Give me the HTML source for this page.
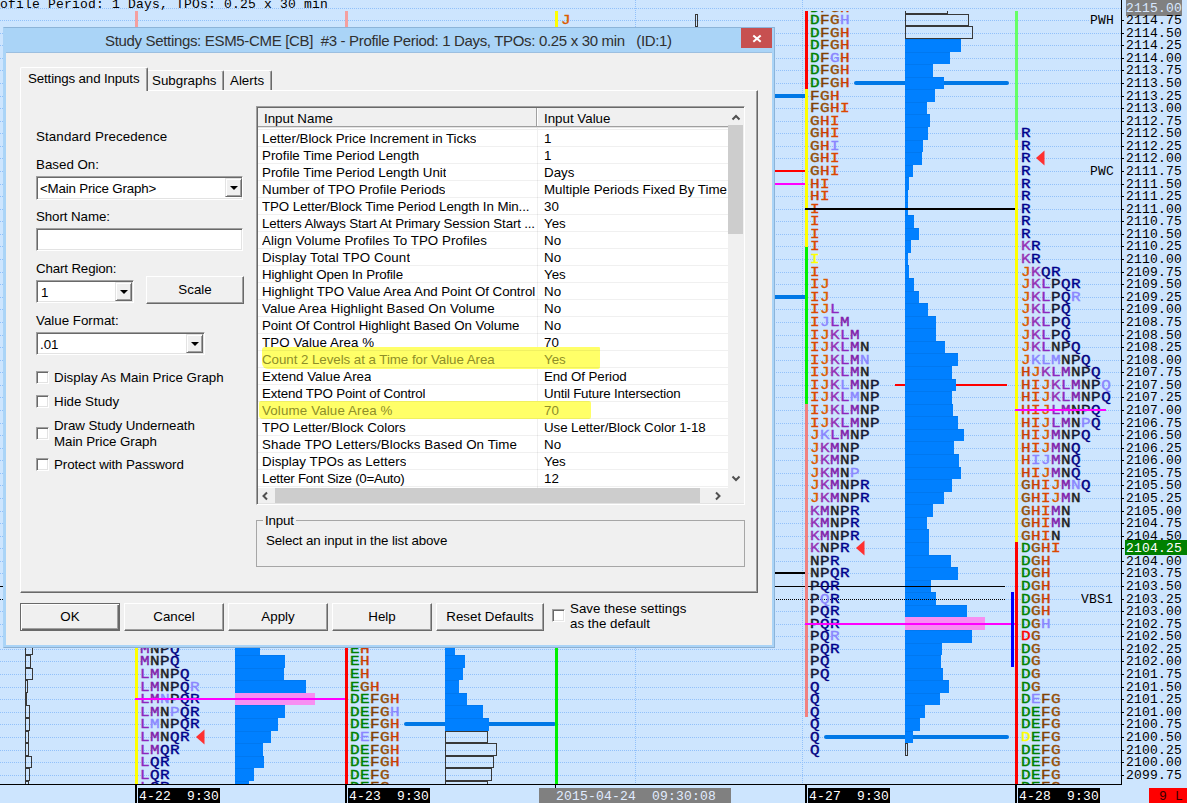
<!DOCTYPE html><html><head><meta charset="utf-8"><title>Study Settings</title><style>

html,body{margin:0;padding:0}
body{width:1187px;height:803px;overflow:hidden;position:relative;background:#cde5fe;font-family:"Liberation Sans",sans-serif;font-size:13.33px;color:#000}
div,span{box-sizing:border-box}
.a{position:absolute}
.g{position:absolute;left:0;width:1121px;height:1px;background:repeating-linear-gradient(90deg,#92c1fa 0 1px,transparent 1px 2px)}
.vg{position:absolute;width:1px;top:0px;height:784px;background:repeating-linear-gradient(180deg,#92c1fa 0 1px,transparent 1px 2px)}
.m{font-family:"Liberation Mono",monospace}
.pl{position:absolute;left:1126px;font-family:"Liberation Mono",monospace;font-size:13px;letter-spacing:0.2px;line-height:13px;height:13px;white-space:pre}
.pl span,.lb span{display:inline-block;transform:scaleY(.94);transform-origin:50% 80%}
.lb{position:absolute;font-family:"Liberation Mono",monospace;font-size:13px;letter-spacing:0.2px;line-height:13px;height:13px;white-space:pre;background:#cde5fe}
  .tk{position:absolute;left:1122px;width:2px;height:1px;background:#000}
.t{position:absolute;font-family:"Liberation Mono",monospace;font-weight:normal;-webkit-text-stroke:0.45px;font-size:16px;letter-spacing:0.4px;line-height:14px;height:14px;white-space:pre;transform:scaleY(.80);transform-origin:50% 50%}
.vb{position:absolute;background:#0080ff}
.vo{position:absolute;border:1px solid #383838}
.tl{position:absolute;top:788px;height:15px;background:#000;color:#fff;font-family:"Liberation Mono",monospace;font-size:13px;letter-spacing:0.2px;line-height:17px;white-space:pre}
.cD{color:#008000}.cE{color:#008000}.cF{color:#804000}.cG{color:#96500a}.cH{color:#cc3c00}.cI{color:#dc4600}.cJ{color:#dc5a00}
.cK{color:#9632b4}.cL{color:#8c28be}.cM{color:#8220aa}.cN{color:#202020}.cP{color:#141432}.cQ{color:#000082}.cR{color:#00008c}
.hl{color:#8a86ff}.yl{color:#ffff00}.rd{color:#ff0000}



#dlg .x{position:absolute;white-space:pre;line-height:16px;height:16px}
.btn{position:absolute;height:28px;top:603px;background:#f0f0f0;border:1px solid;border-color:#fff #696969 #696969 #fff;box-shadow:inset -1px -1px 0 #a0a0a0,inset 1px 1px 0 #f0f0f0;text-align:center;line-height:26px}
.sunk{position:absolute;background:#fff;border:1px solid;border-color:#a0a0a0 #fff #fff #a0a0a0;box-shadow:inset 1px 1px 0 #696969,inset -1px -1px 0 #e3e3e3}
.drop{position:absolute;width:17px;background:#f0f0f0;border:1px solid;border-color:#e3e3e3 #696969 #696969 #e3e3e3;box-shadow:inset 1px 1px 0 #fff,inset -1px -1px 0 #a0a0a0}
.drop:after{content:"";position:absolute;left:4px;top:7px;border:4px solid transparent;border-top:4px solid #000;border-bottom:0}
.cb{position:absolute;width:13px;height:13px;background:#fff;border:1px solid;border-color:#a0a0a0 #fff #fff #a0a0a0;box-shadow:inset 1px 1px 0 #696969,inset -1px -1px 0 #e3e3e3}
.row{position:absolute;left:0;width:470px;height:17px;border-bottom:1px solid rgba(0,0,0,0.06)}
.row .n{position:absolute;left:4px;top:0;line-height:17px;white-space:pre;max-width:275px;overflow:hidden}
.row .v{position:absolute;left:286px;top:0;line-height:17px;white-space:pre}

</style></head><body>
<div class="a" id="chart" style="left:0;top:0;width:1187px;height:803px;overflow:hidden">
<div class="g" style="top:8px"></div>
<div class="g" style="top:20px"></div>
<div class="g" style="top:33px"></div>
<div class="g" style="top:45px"></div>
<div class="g" style="top:58px"></div>
<div class="g" style="top:70px"></div>
<div class="g" style="top:83px"></div>
<div class="g" style="top:96px"></div>
<div class="g" style="top:108px"></div>
<div class="g" style="top:121px"></div>
<div class="g" style="top:133px"></div>
<div class="g" style="top:146px"></div>
<div class="g" style="top:158px"></div>
<div class="g" style="top:171px"></div>
<div class="g" style="top:184px"></div>
<div class="g" style="top:196px"></div>
<div class="g" style="top:209px"></div>
<div class="g" style="top:221px"></div>
<div class="g" style="top:234px"></div>
<div class="g" style="top:246px"></div>
<div class="g" style="top:259px"></div>
<div class="g" style="top:272px"></div>
<div class="g" style="top:284px"></div>
<div class="g" style="top:297px"></div>
<div class="g" style="top:309px"></div>
<div class="g" style="top:322px"></div>
<div class="g" style="top:335px"></div>
<div class="g" style="top:347px"></div>
<div class="g" style="top:360px"></div>
<div class="g" style="top:372px"></div>
<div class="g" style="top:385px"></div>
<div class="g" style="top:397px"></div>
<div class="g" style="top:410px"></div>
<div class="g" style="top:423px"></div>
<div class="g" style="top:435px"></div>
<div class="g" style="top:448px"></div>
<div class="g" style="top:460px"></div>
<div class="g" style="top:473px"></div>
<div class="g" style="top:485px"></div>
<div class="g" style="top:498px"></div>
<div class="g" style="top:511px"></div>
<div class="g" style="top:523px"></div>
<div class="g" style="top:536px"></div>
<div class="g" style="top:548px"></div>
<div class="g" style="top:561px"></div>
<div class="g" style="top:573px"></div>
<div class="g" style="top:586px"></div>
<div class="g" style="top:599px"></div>
<div class="g" style="top:611px"></div>
<div class="g" style="top:624px"></div>
<div class="g" style="top:636px"></div>
<div class="g" style="top:649px"></div>
<div class="g" style="top:661px"></div>
<div class="g" style="top:674px"></div>
<div class="g" style="top:687px"></div>
<div class="g" style="top:699px"></div>
<div class="g" style="top:712px"></div>
<div class="g" style="top:724px"></div>
<div class="g" style="top:737px"></div>
<div class="g" style="top:750px"></div>
<div class="g" style="top:762px"></div>
<div class="g" style="top:775px"></div>
<div class="vg" style="left:635px"></div>
<div class="vg" style="left:802px"></div>
<div class="a m" style="left:-16px;top:-2px;font-size:13px;letter-spacing:0.2px;line-height:13px;white-space:pre">Profile Period: 1 Days, TPOs: 0.25 x 30 min</div>
<div class="a" style="left:0;top:11px;width:1121px;height:773px;overflow:hidden"><div class="a" style="left:0;top:-11px;width:1121px;height:803px">
<div class="a" style="left:500px;top:94px;width:305px;height:4px;background:#0078e6"></div>
<div class="a" style="left:500px;top:170px;width:305px;height:2px;background:#ff0000"></div>
<div class="a" style="left:500px;top:183px;width:305px;height:2px;background:#ff00ff"></div>
<div class="a" style="left:500px;top:295px;width:305px;height:4px;background:#0078e6"></div>
<div class="a" style="left:500px;top:572px;width:305px;height:2px;background:#000"></div>
<div class="vo" style="left:905px;top:1px;width:43px;height:13px"></div>
<div class="vo" style="left:905px;top:14px;width:64px;height:12px"></div>
<div class="vo" style="left:905px;top:26px;width:68px;height:13px"></div>
<div class="a" style="left:905px;top:39px;width:56px;height:13px;background:#0080ff;border-top:1px solid #0078f0"></div>
<div class="a" style="left:905px;top:52px;width:45px;height:12px;background:#0080ff;border-top:1px solid #0078f0"></div>
<div class="a" style="left:905px;top:64px;width:28px;height:13px;background:#0080ff;border-top:1px solid #0078f0"></div>
<div class="a" style="left:905px;top:77px;width:39px;height:12px;background:#0080ff;border-top:1px solid #0078f0"></div>
<div class="a" style="left:905px;top:89px;width:30px;height:13px;background:#0080ff;border-top:1px solid #0078f0"></div>
<div class="a" style="left:905px;top:102px;width:22px;height:12px;background:#0080ff;border-top:1px solid #0078f0"></div>
<div class="a" style="left:905px;top:114px;width:25px;height:13px;background:#0080ff;border-top:1px solid #0078f0"></div>
<div class="a" style="left:905px;top:127px;width:23px;height:13px;background:#0080ff;border-top:1px solid #0078f0"></div>
<div class="a" style="left:905px;top:140px;width:18px;height:12px;background:#0080ff;border-top:1px solid #0078f0"></div>
<div class="a" style="left:905px;top:152px;width:17px;height:13px;background:#0080ff;border-top:1px solid #0078f0"></div>
<div class="a" style="left:905px;top:165px;width:8px;height:12px;background:#0080ff;border-top:1px solid #0078f0"></div>
<div class="a" style="left:905px;top:177px;width:4px;height:13px;background:#0080ff;border-top:1px solid #0078f0"></div>
<div class="a" style="left:905px;top:190px;width:3px;height:12px;background:#0080ff;border-top:1px solid #0078f0"></div>
<div class="a" style="left:905px;top:202px;width:3px;height:13px;background:#0080ff;border-top:1px solid #0078f0"></div>
<div class="a" style="left:905px;top:215px;width:9px;height:13px;background:#0080ff;border-top:1px solid #0078f0"></div>
<div class="a" style="left:905px;top:228px;width:14px;height:12px;background:#0080ff;border-top:1px solid #0078f0"></div>
<div class="a" style="left:905px;top:240px;width:6px;height:13px;background:#0080ff;border-top:1px solid #0078f0"></div>
<div class="a" style="left:905px;top:253px;width:3px;height:12px;background:#0080ff;border-top:1px solid #0078f0"></div>
<div class="a" style="left:905px;top:265px;width:4px;height:13px;background:#0080ff;border-top:1px solid #0078f0"></div>
<div class="a" style="left:905px;top:278px;width:9px;height:13px;background:#0080ff;border-top:1px solid #0078f0"></div>
<div class="a" style="left:905px;top:291px;width:14px;height:12px;background:#0080ff;border-top:1px solid #0078f0"></div>
<div class="a" style="left:905px;top:303px;width:23px;height:13px;background:#0080ff;border-top:1px solid #0078f0"></div>
<div class="a" style="left:905px;top:316px;width:31px;height:12px;background:#0080ff;border-top:1px solid #0078f0"></div>
<div class="a" style="left:905px;top:328px;width:31px;height:13px;background:#0080ff;border-top:1px solid #0078f0"></div>
<div class="a" style="left:905px;top:341px;width:40px;height:12px;background:#0080ff;border-top:1px solid #0078f0"></div>
<div class="a" style="left:905px;top:353px;width:53px;height:13px;background:#0080ff;border-top:1px solid #0078f0"></div>
<div class="a" style="left:905px;top:366px;width:47px;height:13px;background:#0080ff;border-top:1px solid #0078f0"></div>
<div class="a" style="left:905px;top:379px;width:51px;height:12px;background:#0080ff;border-top:1px solid #0078f0"></div>
<div class="a" style="left:905px;top:391px;width:47px;height:13px;background:#0080ff;border-top:1px solid #0078f0"></div>
<div class="a" style="left:905px;top:404px;width:48px;height:12px;background:#0080ff;border-top:1px solid #0078f0"></div>
<div class="a" style="left:905px;top:416px;width:53px;height:13px;background:#0080ff;border-top:1px solid #0078f0"></div>
<div class="a" style="left:905px;top:429px;width:59px;height:12px;background:#0080ff;border-top:1px solid #0078f0"></div>
<div class="a" style="left:905px;top:441px;width:49px;height:13px;background:#0080ff;border-top:1px solid #0078f0"></div>
<div class="a" style="left:905px;top:454px;width:54px;height:13px;background:#0080ff;border-top:1px solid #0078f0"></div>
<div class="a" style="left:905px;top:467px;width:56px;height:12px;background:#0080ff;border-top:1px solid #0078f0"></div>
<div class="a" style="left:905px;top:479px;width:47px;height:13px;background:#0080ff;border-top:1px solid #0078f0"></div>
<div class="a" style="left:905px;top:492px;width:39px;height:12px;background:#0080ff;border-top:1px solid #0078f0"></div>
<div class="a" style="left:905px;top:504px;width:28px;height:13px;background:#0080ff;border-top:1px solid #0078f0"></div>
<div class="a" style="left:905px;top:517px;width:22px;height:12px;background:#0080ff;border-top:1px solid #0078f0"></div>
<div class="a" style="left:905px;top:529px;width:24px;height:13px;background:#0080ff;border-top:1px solid #0078f0"></div>
<div class="a" style="left:905px;top:542px;width:24px;height:13px;background:#0080ff;border-top:1px solid #0078f0"></div>
<div class="a" style="left:905px;top:555px;width:46px;height:12px;background:#0080ff;border-top:1px solid #0078f0"></div>
<div class="a" style="left:905px;top:567px;width:53px;height:13px;background:#0080ff;border-top:1px solid #0078f0"></div>
<div class="a" style="left:905px;top:580px;width:26px;height:12px;background:#0080ff;border-top:1px solid #0078f0"></div>
<div class="a" style="left:905px;top:592px;width:31px;height:13px;background:#0080ff;border-top:1px solid #0078f0"></div>
<div class="a" style="left:905px;top:605px;width:62px;height:12px;background:#0080ff;border-top:1px solid #0078f0"></div>
<div class="a" style="left:905px;top:617px;width:80px;height:13px;background:#f78ff2;border-top:1px solid #f78ff2"></div>
<div class="a" style="left:905px;top:630px;width:67px;height:13px;background:#0080ff;border-top:1px solid #0078f0"></div>
<div class="a" style="left:905px;top:643px;width:37px;height:12px;background:#0080ff;border-top:1px solid #0078f0"></div>
<div class="a" style="left:905px;top:655px;width:36px;height:13px;background:#0080ff;border-top:1px solid #0078f0"></div>
<div class="a" style="left:905px;top:668px;width:38px;height:12px;background:#0080ff;border-top:1px solid #0078f0"></div>
<div class="a" style="left:905px;top:680px;width:44px;height:13px;background:#0080ff;border-top:1px solid #0078f0"></div>
<div class="a" style="left:905px;top:693px;width:35px;height:12px;background:#0080ff;border-top:1px solid #0078f0"></div>
<div class="a" style="left:905px;top:705px;width:20px;height:13px;background:#0080ff;border-top:1px solid #0078f0"></div>
<div class="a" style="left:905px;top:718px;width:15px;height:13px;background:#0080ff;border-top:1px solid #0078f0"></div>
<div class="a" style="left:905px;top:731px;width:8px;height:12px;background:#0080ff;border-top:1px solid #0078f0"></div>
<div class="vo" style="left:905px;top:743px;width:3px;height:13px"></div>
<div class="a" style="left:854px;top:81px;width:155px;height:4px;background:#0078e6;border-radius:2px"></div>
<div class="a" style="left:895px;top:384px;width:112px;height:2px;background:#ff0000"></div>
<div class="a" style="left:824px;top:735px;width:185px;height:4px;background:#0078e6;border-radius:2px"></div>
<div class="a" style="left:905px;top:77px;width:39px;height:12px;background:#0080ff;border-top:1px solid #0078f0"></div>
<div class="a" style="left:905px;top:379px;width:51px;height:12px;background:#0080ff;border-top:1px solid #0078f0"></div>
<div class="a" style="left:905px;top:731px;width:8px;height:12px;background:#0080ff;border-top:1px solid #0078f0"></div>
<div class="a" style="left:0px;top:586px;width:1005px;height:1px;background:#000"></div>
<div class="a" style="left:0;top:599px;width:1006px;height:1px;background:repeating-linear-gradient(90deg,#000 0 1px,transparent 1px 2px)"></div>
<div class="a" style="left:805px;top:11px;width:3px;height:78px;background:#ff0000"></div>
<div class="a" style="left:805px;top:89px;width:3px;height:158px;background:#ffff00"></div>
<div class="a" style="left:805px;top:247px;width:3px;height:157px;background:#00f000"></div>
<div class="a" style="left:805px;top:404px;width:3px;height:313px;background:#f08080"></div>
<div class="t" style="left:810px;top:1.5px"><span class="cD">D</span><span class="cF">F</span><span class="cG">G</span><span class="cH">H</span></div>
<div class="t" style="left:810px;top:13.5px"><span class="cD">D</span><span class="cF">F</span><span class="cG">G</span><span class="hl">H</span></div>
<div class="t" style="left:810px;top:26.5px"><span class="cD">D</span><span class="cF">F</span><span class="cG">G</span><span class="cH">H</span></div>
<div class="t" style="left:810px;top:38.5px"><span class="cD">D</span><span class="cF">F</span><span class="cG">G</span><span class="cH">H</span></div>
<div class="t" style="left:810px;top:51.5px"><span class="cD">D</span><span class="cF">F</span><span class="hl">G</span><span class="cH">H</span></div>
<div class="t" style="left:810px;top:63.5px"><span class="cD">D</span><span class="cF">F</span><span class="cG">G</span><span class="cH">H</span></div>
<div class="t" style="left:810px;top:76.5px"><span class="cD">D</span><span class="cF">F</span><span class="cG">G</span><span class="cH">H</span></div>
<div class="t" style="left:810px;top:89.5px"><span class="cF">F</span><span class="cG">G</span><span class="cH">H</span></div>
<div class="t" style="left:810px;top:101.5px"><span class="cF">F</span><span class="cG">G</span><span class="cH">H</span><span class="cI">I</span></div>
<div class="t" style="left:810px;top:114.5px"><span class="cG">G</span><span class="cH">H</span><span class="cI">I</span></div>
<div class="t" style="left:810px;top:126.5px"><span class="cG">G</span><span class="cH">H</span><span class="cI">I</span></div>
<div class="t" style="left:810px;top:139.5px"><span class="cG">G</span><span class="cH">H</span><span class="hl">I</span></div>
<div class="t" style="left:810px;top:151.5px"><span class="cG">G</span><span class="cH">H</span><span class="cI">I</span></div>
<div class="t" style="left:810px;top:164.5px"><span class="cG">G</span><span class="cH">H</span><span class="cI">I</span></div>
<div class="t" style="left:810px;top:177.5px"><span class="cH">H</span><span class="cI">I</span></div>
<div class="t" style="left:810px;top:189.5px"><span class="cH">H</span><span class="cI">I</span></div>
<div class="t" style="left:810px;top:202.5px"><span class="cI">I</span></div>
<div class="t" style="left:810px;top:214.5px"><span class="cI">I</span></div>
<div class="t" style="left:810px;top:227.5px"><span class="cI">I</span></div>
<div class="t" style="left:810px;top:239.5px"><span class="cI">I</span></div>
<div class="t" style="left:810px;top:252.5px"><span class="yl">I</span></div>
<div class="t" style="left:810px;top:265.5px"><span class="cI">I</span></div>
<div class="t" style="left:810px;top:277.5px"><span class="cI">I</span><span class="cJ">J</span></div>
<div class="t" style="left:810px;top:290.5px"><span class="cI">I</span><span class="cJ">J</span></div>
<div class="t" style="left:810px;top:302.5px"><span class="cI">I</span><span class="cJ">J</span><span class="cL">L</span></div>
<div class="t" style="left:810px;top:315.5px"><span class="cI">I</span><span class="hl">J</span><span class="cL">L</span><span class="cM">M</span></div>
<div class="t" style="left:810px;top:328.5px"><span class="cI">I</span><span class="cJ">J</span><span class="cK">K</span><span class="cL">L</span><span class="cM">M</span></div>
<div class="t" style="left:810px;top:340.5px"><span class="cI">I</span><span class="cJ">J</span><span class="cK">K</span><span class="cL">L</span><span class="cM">M</span><span class="cN">N</span></div>
<div class="t" style="left:810px;top:353.5px"><span class="cI">I</span><span class="cJ">J</span><span class="cK">K</span><span class="cL">L</span><span class="cM">M</span><span class="hl">N</span></div>
<div class="t" style="left:810px;top:365.5px"><span class="cI">I</span><span class="cJ">J</span><span class="cK">K</span><span class="cL">L</span><span class="cM">M</span><span class="cN">N</span></div>
<div class="t" style="left:810px;top:378.5px"><span class="cI">I</span><span class="cJ">J</span><span class="cK">K</span><span class="hl">L</span><span class="cM">M</span><span class="cN">N</span><span class="cP">P</span></div>
<div class="t" style="left:810px;top:390.5px"><span class="cI">I</span><span class="cJ">J</span><span class="cK">K</span><span class="cL">L</span><span class="hl">M</span><span class="cN">N</span><span class="cP">P</span></div>
<div class="t" style="left:810px;top:403.5px"><span class="cI">I</span><span class="cJ">J</span><span class="cK">K</span><span class="cL">L</span><span class="cM">M</span><span class="cN">N</span><span class="cP">P</span></div>
<div class="t" style="left:810px;top:416.5px"><span class="cI">I</span><span class="cJ">J</span><span class="cK">K</span><span class="cL">L</span><span class="cM">M</span><span class="cN">N</span><span class="cP">P</span></div>
<div class="t" style="left:810px;top:428.5px"><span class="cJ">J</span><span class="hl">K</span><span class="cL">L</span><span class="cM">M</span><span class="cN">N</span><span class="cP">P</span></div>
<div class="t" style="left:810px;top:441.5px"><span class="cJ">J</span><span class="cK">K</span><span class="cM">M</span><span class="cN">N</span><span class="cP">P</span></div>
<div class="t" style="left:810px;top:453.5px"><span class="cJ">J</span><span class="cK">K</span><span class="cM">M</span><span class="cN">N</span><span class="cP">P</span></div>
<div class="t" style="left:810px;top:466.5px"><span class="cJ">J</span><span class="cK">K</span><span class="cM">M</span><span class="cN">N</span><span class="hl">P</span></div>
<div class="t" style="left:810px;top:478.5px"><span class="cJ">J</span><span class="cK">K</span><span class="cM">M</span><span class="cN">N</span><span class="cP">P</span><span class="cR">R</span></div>
<div class="t" style="left:810px;top:491.5px"><span class="cJ">J</span><span class="cK">K</span><span class="cM">M</span><span class="cN">N</span><span class="cP">P</span><span class="cR">R</span></div>
<div class="t" style="left:810px;top:504.5px"><span class="cK">K</span><span class="cM">M</span><span class="cN">N</span><span class="cP">P</span><span class="cR">R</span></div>
<div class="t" style="left:810px;top:516.5px"><span class="cK">K</span><span class="cM">M</span><span class="cN">N</span><span class="cP">P</span><span class="cR">R</span></div>
<div class="t" style="left:810px;top:529.5px"><span class="cK">K</span><span class="cM">M</span><span class="cN">N</span><span class="cP">P</span><span class="cR">R</span></div>
<div class="t" style="left:810px;top:541.5px"><span class="cK">K</span><span class="cN">N</span><span class="cP">P</span><span class="cR">R</span></div>
<div class="t" style="left:810px;top:554.5px"><span class="cN">N</span><span class="cP">P</span><span class="cR">R</span></div>
<div class="t" style="left:810px;top:566.5px"><span class="cN">N</span><span class="cP">P</span><span class="cQ">Q</span><span class="cR">R</span></div>
<div class="t" style="left:810px;top:579.5px"><span class="cP">P</span><span class="cQ">Q</span><span class="cR">R</span></div>
<div class="t" style="left:810px;top:592.5px"><span class="cP">P</span><span class="hl">Q</span><span class="cR">R</span></div>
<div class="t" style="left:810px;top:604.5px"><span class="cP">P</span><span class="cQ">Q</span><span class="cR">R</span></div>
<div class="t" style="left:810px;top:617.5px"><span class="cP">P</span><span class="cQ">Q</span><span class="cR">R</span></div>
<div class="t" style="left:810px;top:629.5px"><span class="cP">P</span><span class="cQ">Q</span><span class="hl">R</span></div>
<div class="t" style="left:810px;top:642.5px"><span class="cP">P</span><span class="cQ">Q</span><span class="cR">R</span></div>
<div class="t" style="left:810px;top:654.5px"><span class="cP">P</span><span class="cQ">Q</span></div>
<div class="t" style="left:810px;top:667.5px"><span class="cP">P</span><span class="cQ">Q</span></div>
<div class="t" style="left:810px;top:680.5px"><span class="cQ">Q</span></div>
<div class="t" style="left:810px;top:692.5px"><span class="cQ">Q</span></div>
<div class="t" style="left:810px;top:705.5px"><span class="cQ">Q</span></div>
<div class="t" style="left:810px;top:717.5px"><span class="cQ">Q</span></div>
<div class="t" style="left:810px;top:730.5px"><span class="cQ">Q</span></div>
<div class="t" style="left:810px;top:743.5px"><span class="cQ">Q</span></div>
<div class="a" style="left:805px;top:208px;width:211px;height:2px;background:#000"></div>
<svg class="a" style="left:856px;top:540px" width="9" height="16" viewBox="0 0 9 16"><polygon points="0,8 8.5,0.5 8.5,15.5" fill="#ff3030"/></svg>
<div class="a" style="left:805px;top:623px;width:211px;height:2px;background:#ff00ff"></div>
<div class="a" style="left:1011px;top:592px;width:3px;height:75px;background:#0000ff"></div>
<div class="a" style="left:1015px;top:11px;width:3px;height:129px;background:#66ff66"></div>
<div class="a" style="left:1015px;top:140px;width:3px;height:402px;background:#ffff00"></div>
<div class="a" style="left:1015px;top:542px;width:3px;height:242px;background:#ff0000"></div>
<div class="t" style="left:1021px;top:126.5px"><span class="cR">R</span></div>
<div class="t" style="left:1021px;top:139.5px"><span class="cR">R</span></div>
<div class="t" style="left:1021px;top:151.5px"><span class="cR">R</span></div>
<div class="t" style="left:1021px;top:164.5px"><span class="cR">R</span></div>
<div class="t" style="left:1021px;top:177.5px"><span class="cR">R</span></div>
<div class="t" style="left:1021px;top:189.5px"><span class="cR">R</span></div>
<div class="t" style="left:1021px;top:202.5px"><span class="cR">R</span></div>
<div class="t" style="left:1021px;top:214.5px"><span class="cR">R</span></div>
<div class="t" style="left:1021px;top:227.5px"><span class="cR">R</span></div>
<div class="t" style="left:1021px;top:239.5px"><span class="cK">K</span><span class="cR">R</span></div>
<div class="t" style="left:1021px;top:252.5px"><span class="cK">K</span><span class="cR">R</span></div>
<div class="t" style="left:1021px;top:265.5px"><span class="cJ">J</span><span class="cK">K</span><span class="cQ">Q</span><span class="cR">R</span></div>
<div class="t" style="left:1021px;top:277.5px"><span class="cJ">J</span><span class="cK">K</span><span class="cL">L</span><span class="cP">P</span><span class="cQ">Q</span><span class="cR">R</span></div>
<div class="t" style="left:1021px;top:290.5px"><span class="cJ">J</span><span class="cK">K</span><span class="cL">L</span><span class="cP">P</span><span class="cQ">Q</span><span class="hl">R</span></div>
<div class="t" style="left:1021px;top:302.5px"><span class="cJ">J</span><span class="cK">K</span><span class="cL">L</span><span class="cP">P</span><span class="cQ">Q</span></div>
<div class="t" style="left:1021px;top:315.5px"><span class="cJ">J</span><span class="cK">K</span><span class="cL">L</span><span class="cP">P</span><span class="cQ">Q</span></div>
<div class="t" style="left:1021px;top:328.5px"><span class="cJ">J</span><span class="cK">K</span><span class="cL">L</span><span class="cP">P</span><span class="cQ">Q</span></div>
<div class="t" style="left:1021px;top:340.5px"><span class="cJ">J</span><span class="cK">K</span><span class="cL">L</span><span class="cN">N</span><span class="cP">P</span><span class="cQ">Q</span></div>
<div class="t" style="left:1021px;top:353.5px"><span class="cJ">J</span><span class="hl">K</span><span class="hl">L</span><span class="hl">M</span><span class="cN">N</span><span class="cP">P</span><span class="cQ">Q</span></div>
<div class="t" style="left:1021px;top:365.5px"><span class="cH">H</span><span class="cJ">J</span><span class="cK">K</span><span class="cL">L</span><span class="cM">M</span><span class="cN">N</span><span class="cP">P</span><span class="cQ">Q</span></div>
<div class="t" style="left:1021px;top:378.5px"><span class="cH">H</span><span class="cI">I</span><span class="cJ">J</span><span class="cK">K</span><span class="cL">L</span><span class="cM">M</span><span class="cN">N</span><span class="cP">P</span><span class="hl">Q</span></div>
<div class="t" style="left:1021px;top:390.5px"><span class="cH">H</span><span class="cI">I</span><span class="cJ">J</span><span class="cK">K</span><span class="cL">L</span><span class="cM">M</span><span class="cN">N</span><span class="cP">P</span><span class="cQ">Q</span></div>
<div class="t" style="left:1021px;top:403.5px"><span class="cH">H</span><span class="cI">I</span><span class="cJ">J</span><span class="cL">L</span><span class="cM">M</span><span class="cN">N</span><span class="cP">P</span><span class="cQ">Q</span></div>
<div class="t" style="left:1021px;top:416.5px"><span class="cH">H</span><span class="cI">I</span><span class="cJ">J</span><span class="cL">L</span><span class="cM">M</span><span class="cN">N</span><span class="hl">P</span><span class="cQ">Q</span></div>
<div class="t" style="left:1021px;top:428.5px"><span class="cH">H</span><span class="cI">I</span><span class="cJ">J</span><span class="cM">M</span><span class="cN">N</span><span class="cP">P</span><span class="cQ">Q</span></div>
<div class="t" style="left:1021px;top:441.5px"><span class="cH">H</span><span class="cI">I</span><span class="cJ">J</span><span class="cM">M</span><span class="cN">N</span><span class="cQ">Q</span></div>
<div class="t" style="left:1021px;top:453.5px"><span class="cH">H</span><span class="hl">I</span><span class="hl">J</span><span class="cM">M</span><span class="cN">N</span><span class="cQ">Q</span></div>
<div class="t" style="left:1021px;top:466.5px"><span class="cH">H</span><span class="cI">I</span><span class="cJ">J</span><span class="cM">M</span><span class="cN">N</span><span class="cQ">Q</span></div>
<div class="t" style="left:1021px;top:478.5px"><span class="cG">G</span><span class="cH">H</span><span class="cI">I</span><span class="cJ">J</span><span class="cM">M</span><span class="hl">N</span><span class="cQ">Q</span></div>
<div class="t" style="left:1021px;top:491.5px"><span class="cG">G</span><span class="cH">H</span><span class="cI">I</span><span class="cJ">J</span><span class="cM">M</span><span class="cN">N</span></div>
<div class="t" style="left:1021px;top:504.5px"><span class="cG">G</span><span class="cH">H</span><span class="cI">I</span><span class="cM">M</span><span class="cN">N</span></div>
<div class="t" style="left:1021px;top:516.5px"><span class="cG">G</span><span class="cH">H</span><span class="cI">I</span><span class="cM">M</span><span class="cN">N</span></div>
<div class="t" style="left:1021px;top:529.5px"><span class="cG">G</span><span class="cH">H</span><span class="cI">I</span><span class="cN">N</span></div>
<div class="t" style="left:1021px;top:541.5px"><span class="cD">D</span><span class="cG">G</span><span class="cH">H</span><span class="cI">I</span></div>
<div class="t" style="left:1021px;top:554.5px"><span class="cD">D</span><span class="cG">G</span><span class="cH">H</span></div>
<div class="t" style="left:1021px;top:566.5px"><span class="cD">D</span><span class="cG">G</span><span class="cH">H</span></div>
<div class="t" style="left:1021px;top:579.5px"><span class="cD">D</span><span class="cG">G</span><span class="cH">H</span></div>
<div class="t" style="left:1021px;top:592.5px"><span class="cD">D</span><span class="cG">G</span><span class="cH">H</span></div>
<div class="t" style="left:1021px;top:604.5px"><span class="cD">D</span><span class="cG">G</span><span class="cH">H</span></div>
<div class="t" style="left:1021px;top:617.5px"><span class="cD">D</span><span class="cG">G</span><span class="hl">H</span></div>
<div class="t" style="left:1021px;top:629.5px"><span class="rd">D</span><span class="cG">G</span></div>
<div class="t" style="left:1021px;top:642.5px"><span class="cD">D</span><span class="cG">G</span></div>
<div class="t" style="left:1021px;top:654.5px"><span class="cD">D</span><span class="cG">G</span></div>
<div class="t" style="left:1021px;top:667.5px"><span class="cD">D</span><span class="cG">G</span></div>
<div class="t" style="left:1021px;top:680.5px"><span class="cD">D</span><span class="cG">G</span></div>
<div class="t" style="left:1021px;top:692.5px"><span class="cD">D</span><span class="hl">E</span><span class="cF">F</span><span class="cG">G</span></div>
<div class="t" style="left:1021px;top:705.5px"><span class="cD">D</span><span class="cE">E</span><span class="cF">F</span><span class="cG">G</span></div>
<div class="t" style="left:1021px;top:717.5px"><span class="cD">D</span><span class="cE">E</span><span class="cF">F</span><span class="cG">G</span></div>
<div class="t" style="left:1021px;top:730.5px"><span class="yl">D</span><span class="cE">E</span><span class="cF">F</span><span class="cG">G</span></div>
<div class="t" style="left:1021px;top:743.5px"><span class="cD">D</span><span class="cE">E</span><span class="cF">F</span><span class="cG">G</span></div>
<div class="t" style="left:1021px;top:755.5px"><span class="cD">D</span><span class="cE">E</span><span class="cF">F</span><span class="cG">G</span></div>
<div class="t" style="left:1021px;top:768.5px"><span class="cD">D</span><span class="cE">E</span><span class="cF">F</span><span class="cG">G</span></div>
<div class="t" style="left:1021px;top:780.5px"><span class="cD">D</span><span class="cE">E</span><span class="cF">F</span><span class="cG">G</span></div>
<svg class="a" style="left:1036px;top:150px" width="9" height="16" viewBox="0 0 9 16"><polygon points="0,8 8.5,0.5 8.5,15.5" fill="#ff3030"/></svg>
<div class="a" style="left:1015px;top:409px;width:91px;height:2px;background:#ff00ff"></div>
<div class="lb" style="left:1089px;width:32px;padding-left:1px;top:14px"><span>PWH</span></div>
<div class="lb" style="left:1089px;width:32px;padding-left:1px;top:165px"><span>PWC</span></div>
<div class="lb" style="left:1080px;width:41px;padding-left:1px;top:593px"><span>VBS1</span></div>
<div class="a" style="left:135px;top:11px;width:3px;height:16px;background:#f4a0a0"></div>
<div class="a" style="left:135px;top:647px;width:3px;height:137px;background:#ffff00"></div>
<div class="a" style="left:235px;top:643px;width:25px;height:12px;background:#0080ff;border-top:1px solid #0078f0"></div>
<div class="a" style="left:235px;top:655px;width:50px;height:13px;background:#0080ff;border-top:1px solid #0078f0"></div>
<div class="a" style="left:235px;top:668px;width:49px;height:12px;background:#0080ff;border-top:1px solid #0078f0"></div>
<div class="a" style="left:235px;top:680px;width:71px;height:13px;background:#0080ff;border-top:1px solid #0078f0"></div>
<div class="a" style="left:235px;top:693px;width:80px;height:12px;background:#f78ff2;border-top:1px solid #f78ff2"></div>
<div class="a" style="left:235px;top:705px;width:50px;height:13px;background:#0080ff;border-top:1px solid #0078f0"></div>
<div class="a" style="left:235px;top:718px;width:43px;height:13px;background:#0080ff;border-top:1px solid #0078f0"></div>
<div class="a" style="left:235px;top:731px;width:36px;height:12px;background:#0080ff;border-top:1px solid #0078f0"></div>
<div class="a" style="left:235px;top:743px;width:28px;height:13px;background:#0080ff;border-top:1px solid #0078f0"></div>
<div class="a" style="left:235px;top:756px;width:29px;height:12px;background:#0080ff;border-top:1px solid #0078f0"></div>
<div class="a" style="left:235px;top:768px;width:19px;height:13px;background:#0080ff;border-top:1px solid #0078f0"></div>
<div class="a" style="left:235px;top:781px;width:14px;height:13px;background:#0080ff;border-top:1px solid #0078f0"></div>
<div class="t" style="left:140px;top:642.5px"><span class="cM">M</span><span class="cN">N</span><span class="cP">P</span><span class="cQ">Q</span></div>
<div class="t" style="left:140px;top:654.5px"><span class="cM">M</span><span class="cN">N</span><span class="cP">P</span><span class="cQ">Q</span></div>
<div class="t" style="left:140px;top:667.5px"><span class="cL">L</span><span class="cM">M</span><span class="cN">N</span><span class="cP">P</span><span class="cQ">Q</span></div>
<div class="t" style="left:140px;top:680.5px"><span class="cL">L</span><span class="cM">M</span><span class="cN">N</span><span class="cP">P</span><span class="cQ">Q</span><span class="hl">R</span></div>
<div class="t" style="left:140px;top:692.5px"><span class="cL">L</span><span class="cM">M</span><span class="hl">N</span><span class="cP">P</span><span class="cQ">Q</span><span class="cR">R</span></div>
<div class="t" style="left:140px;top:705.5px"><span class="cL">L</span><span class="cM">M</span><span class="cN">N</span><span class="hl">P</span><span class="cQ">Q</span><span class="cR">R</span></div>
<div class="t" style="left:140px;top:717.5px"><span class="cL">L</span><span class="hl">M</span><span class="cN">N</span><span class="cP">P</span><span class="cQ">Q</span><span class="cR">R</span></div>
<div class="t" style="left:140px;top:730.5px"><span class="cL">L</span><span class="cM">M</span><span class="cN">N</span><span class="cQ">Q</span><span class="cR">R</span></div>
<div class="t" style="left:140px;top:743.5px"><span class="cL">L</span><span class="cM">M</span><span class="cQ">Q</span><span class="cR">R</span></div>
<div class="t" style="left:140px;top:755.5px"><span class="cL">L</span><span class="cQ">Q</span><span class="cR">R</span></div>
<div class="t" style="left:140px;top:768.5px"><span class="cL">L</span><span class="cQ">Q</span><span class="cR">R</span></div>
<div class="t" style="left:140px;top:780.5px"><span class="cL">L</span><span class="cQ">Q</span><span class="cR">R</span></div>
<svg class="a" style="left:196px;top:729px" width="9" height="16" viewBox="0 0 9 16"><polygon points="0,8 8.5,0.5 8.5,15.5" fill="#ff3030"/></svg>
<div class="a" style="left:135px;top:698px;width:211px;height:2px;background:#ff00ff"></div>
<div class="vo" style="left:25px;top:643px;width:8px;height:12px"></div>
<div class="vo" style="left:25px;top:655px;width:6px;height:13px"></div>
<div class="vo" style="left:25px;top:668px;width:8px;height:12px"></div>
<div class="vo" style="left:25px;top:680px;width:3px;height:13px"></div>
<div class="vo" style="left:25px;top:693px;width:2px;height:12px"></div>
<div class="vo" style="left:25px;top:705px;width:5px;height:13px"></div>
<div class="vo" style="left:25px;top:718px;width:5px;height:13px"></div>
<div class="vo" style="left:25px;top:731px;width:4px;height:12px"></div>
<div class="vo" style="left:25px;top:743px;width:4px;height:13px"></div>
<div class="vo" style="left:25px;top:756px;width:7px;height:12px"></div>
<div class="vo" style="left:25px;top:768px;width:5px;height:13px"></div>
<div class="vo" style="left:25px;top:781px;width:4px;height:13px"></div>
<div class="a" style="left:345px;top:11px;width:3px;height:16px;background:#f4a0a0"></div>
<div class="a" style="left:345px;top:647px;width:3px;height:137px;background:#ff0000"></div>
<div class="t" style="left:350px;top:642.5px"><span class="cE">E</span><span class="cH">H</span></div>
<div class="t" style="left:350px;top:654.5px"><span class="cE">E</span><span class="cH">H</span></div>
<div class="t" style="left:350px;top:667.5px"><span class="cE">E</span><span class="cH">H</span></div>
<div class="t" style="left:350px;top:680.5px"><span class="cE">E</span><span class="cG">G</span><span class="cH">H</span></div>
<div class="t" style="left:350px;top:692.5px"><span class="cD">D</span><span class="cE">E</span><span class="cF">F</span><span class="cG">G</span><span class="cH">H</span></div>
<div class="t" style="left:350px;top:705.5px"><span class="cD">D</span><span class="cE">E</span><span class="cF">F</span><span class="cG">G</span><span class="hl">H</span></div>
<div class="t" style="left:350px;top:717.5px"><span class="cD">D</span><span class="cE">E</span><span class="cF">F</span><span class="cG">G</span><span class="cH">H</span></div>
<div class="t" style="left:350px;top:730.5px"><span class="cD">D</span><span class="hl">E</span><span class="cF">F</span><span class="cG">G</span><span class="cH">H</span></div>
<div class="t" style="left:350px;top:743.5px"><span class="cD">D</span><span class="cE">E</span><span class="cF">F</span><span class="cG">G</span><span class="cH">H</span></div>
<div class="t" style="left:350px;top:755.5px"><span class="cD">D</span><span class="cE">E</span><span class="cF">F</span><span class="cG">G</span><span class="cH">H</span></div>
<div class="t" style="left:350px;top:768.5px"><span class="cD">D</span><span class="cE">E</span><span class="cF">F</span><span class="cG">G</span></div>
<div class="t" style="left:350px;top:780.5px"><span class="cD">D</span><span class="cE">E</span><span class="cF">F</span><span class="cG">G</span></div>
<div class="a" style="left:404px;top:722px;width:152px;height:4px;background:#0078e6;border-radius:2px"></div>
<div class="a" style="left:445px;top:643px;width:10px;height:12px;background:#0080ff;border-top:1px solid #0078f0"></div>
<div class="a" style="left:445px;top:655px;width:20px;height:13px;background:#0080ff;border-top:1px solid #0078f0"></div>
<div class="a" style="left:445px;top:668px;width:18px;height:12px;background:#0080ff;border-top:1px solid #0078f0"></div>
<div class="a" style="left:445px;top:680px;width:14px;height:13px;background:#0080ff;border-top:1px solid #0078f0"></div>
<div class="a" style="left:445px;top:693px;width:22px;height:12px;background:#0080ff;border-top:1px solid #0078f0"></div>
<div class="a" style="left:445px;top:705px;width:38px;height:13px;background:#0080ff;border-top:1px solid #0078f0"></div>
<div class="a" style="left:445px;top:718px;width:44px;height:13px;background:#0080ff;border-top:1px solid #0078f0"></div>
<div class="vo" style="left:445px;top:731px;width:43px;height:12px"></div>
<div class="vo" style="left:445px;top:743px;width:52px;height:13px"></div>
<div class="vo" style="left:445px;top:756px;width:49px;height:12px"></div>
<div class="vo" style="left:445px;top:768px;width:47px;height:13px"></div>
<div class="vo" style="left:445px;top:781px;width:43px;height:13px"></div>
<div class="a" style="left:555px;top:11px;width:3px;height:16px;background:#ffff00"></div>
<div class="a" style="left:555px;top:647px;width:3px;height:137px;background:#00f000"></div>
<div class="t" style="left:561px;top:13.5px"><span class="cJ">J</span></div>
<div class="vo" style="left:695px;top:14px;width:3px;height:13px"></div>
</div></div>
<div class="a" style="left:1121px;top:0;width:1px;height:785px;background:#000"></div>
<div class="pl" style="left:1126px;width:56px;height:16px;top:0px;line-height:17px;background:#808080;color:#d8e8ff"><span>2115.00</span></div>
<div class="tk" style="top:20px"></div>
<div class="pl" style="top:14px"><span>2114.75</span></div>
<div class="tk" style="top:33px"></div>
<div class="pl" style="top:27px"><span>2114.50</span></div>
<div class="tk" style="top:45px"></div>
<div class="pl" style="top:39px"><span>2114.25</span></div>
<div class="tk" style="top:58px"></div>
<div class="pl" style="top:52px"><span>2114.00</span></div>
<div class="tk" style="top:70px"></div>
<div class="pl" style="top:64px"><span>2113.75</span></div>
<div class="tk" style="top:83px"></div>
<div class="pl" style="top:77px"><span>2113.50</span></div>
<div class="tk" style="top:96px"></div>
<div class="pl" style="top:90px"><span>2113.25</span></div>
<div class="tk" style="top:108px"></div>
<div class="pl" style="top:102px"><span>2113.00</span></div>
<div class="tk" style="top:121px"></div>
<div class="pl" style="top:115px"><span>2112.75</span></div>
<div class="tk" style="top:133px"></div>
<div class="pl" style="top:127px"><span>2112.50</span></div>
<div class="tk" style="top:146px"></div>
<div class="pl" style="top:140px"><span>2112.25</span></div>
<div class="tk" style="top:158px"></div>
<div class="pl" style="top:152px"><span>2112.00</span></div>
<div class="tk" style="top:171px"></div>
<div class="pl" style="top:165px"><span>2111.75</span></div>
<div class="tk" style="top:184px"></div>
<div class="pl" style="top:178px"><span>2111.50</span></div>
<div class="tk" style="top:196px"></div>
<div class="pl" style="top:190px"><span>2111.25</span></div>
<div class="tk" style="top:209px"></div>
<div class="pl" style="top:203px"><span>2111.00</span></div>
<div class="tk" style="top:221px"></div>
<div class="pl" style="top:215px"><span>2110.75</span></div>
<div class="tk" style="top:234px"></div>
<div class="pl" style="top:228px"><span>2110.50</span></div>
<div class="tk" style="top:246px"></div>
<div class="pl" style="top:240px"><span>2110.25</span></div>
<div class="tk" style="top:259px"></div>
<div class="pl" style="top:253px"><span>2110.00</span></div>
<div class="tk" style="top:272px"></div>
<div class="pl" style="top:266px"><span>2109.75</span></div>
<div class="tk" style="top:284px"></div>
<div class="pl" style="top:278px"><span>2109.50</span></div>
<div class="tk" style="top:297px"></div>
<div class="pl" style="top:291px"><span>2109.25</span></div>
<div class="tk" style="top:309px"></div>
<div class="pl" style="top:303px"><span>2109.00</span></div>
<div class="tk" style="top:322px"></div>
<div class="pl" style="top:316px"><span>2108.75</span></div>
<div class="tk" style="top:335px"></div>
<div class="pl" style="top:329px"><span>2108.50</span></div>
<div class="tk" style="top:347px"></div>
<div class="pl" style="top:341px"><span>2108.25</span></div>
<div class="tk" style="top:360px"></div>
<div class="pl" style="top:354px"><span>2108.00</span></div>
<div class="tk" style="top:372px"></div>
<div class="pl" style="top:366px"><span>2107.75</span></div>
<div class="tk" style="top:385px"></div>
<div class="pl" style="top:379px"><span>2107.50</span></div>
<div class="tk" style="top:397px"></div>
<div class="pl" style="top:391px"><span>2107.25</span></div>
<div class="tk" style="top:410px"></div>
<div class="pl" style="top:404px"><span>2107.00</span></div>
<div class="tk" style="top:423px"></div>
<div class="pl" style="top:417px"><span>2106.75</span></div>
<div class="tk" style="top:435px"></div>
<div class="pl" style="top:429px"><span>2106.50</span></div>
<div class="tk" style="top:448px"></div>
<div class="pl" style="top:442px"><span>2106.25</span></div>
<div class="tk" style="top:460px"></div>
<div class="pl" style="top:454px"><span>2106.00</span></div>
<div class="tk" style="top:473px"></div>
<div class="pl" style="top:467px"><span>2105.75</span></div>
<div class="tk" style="top:485px"></div>
<div class="pl" style="top:479px"><span>2105.50</span></div>
<div class="tk" style="top:498px"></div>
<div class="pl" style="top:492px"><span>2105.25</span></div>
<div class="tk" style="top:511px"></div>
<div class="pl" style="top:505px"><span>2105.00</span></div>
<div class="tk" style="top:523px"></div>
<div class="pl" style="top:517px"><span>2104.75</span></div>
<div class="tk" style="top:536px"></div>
<div class="pl" style="top:530px"><span>2104.50</span></div>
<div class="tk" style="top:548px"></div>
<div class="pl" style="top:540px;left:1125px;padding-left:1px;width:62px;height:15px;line-height:17px;background:#008000;color:#fff"><span>2104.25</span></div>
<div class="tk" style="top:561px"></div>
<div class="pl" style="top:555px"><span>2104.00</span></div>
<div class="tk" style="top:573px"></div>
<div class="pl" style="top:567px"><span>2103.75</span></div>
<div class="tk" style="top:586px"></div>
<div class="pl" style="top:580px"><span>2103.50</span></div>
<div class="tk" style="top:599px"></div>
<div class="pl" style="top:593px"><span>2103.25</span></div>
<div class="tk" style="top:611px"></div>
<div class="pl" style="top:605px"><span>2103.00</span></div>
<div class="tk" style="top:624px"></div>
<div class="pl" style="top:618px"><span>2102.75</span></div>
<div class="tk" style="top:636px"></div>
<div class="pl" style="top:630px"><span>2102.50</span></div>
<div class="tk" style="top:649px"></div>
<div class="pl" style="top:643px"><span>2102.25</span></div>
<div class="tk" style="top:661px"></div>
<div class="pl" style="top:655px"><span>2102.00</span></div>
<div class="tk" style="top:674px"></div>
<div class="pl" style="top:668px"><span>2101.75</span></div>
<div class="tk" style="top:687px"></div>
<div class="pl" style="top:681px"><span>2101.50</span></div>
<div class="tk" style="top:699px"></div>
<div class="pl" style="top:693px"><span>2101.25</span></div>
<div class="tk" style="top:712px"></div>
<div class="pl" style="top:706px"><span>2101.00</span></div>
<div class="tk" style="top:724px"></div>
<div class="pl" style="top:718px"><span>2100.75</span></div>
<div class="tk" style="top:737px"></div>
<div class="pl" style="top:731px"><span>2100.50</span></div>
<div class="tk" style="top:750px"></div>
<div class="pl" style="top:744px"><span>2100.25</span></div>
<div class="tk" style="top:762px"></div>
<div class="pl" style="top:756px"><span>2100.00</span></div>
<div class="tk" style="top:775px"></div>
<div class="pl" style="top:769px"><span>2099.75</span></div>
<div class="a" style="left:0;top:784px;width:1122px;height:1px;background:#000"></div>
<div class="a" style="left:135px;top:784px;width:2px;height:19px;background:#000"></div>
<div class="tl" style="left:138px;width:82px;padding-left:1px">4-22  9:30</div>
<div class="a" style="left:345px;top:784px;width:2px;height:19px;background:#000"></div>
<div class="tl" style="left:348px;width:82px;padding-left:1px">4-23  9:30</div>
<div class="a" style="left:805px;top:784px;width:2px;height:19px;background:#000"></div>
<div class="tl" style="left:808px;width:82px;padding-left:1px">4-27  9:30</div>
<div class="a" style="left:1015px;top:784px;width:2px;height:19px;background:#000"></div>
<div class="tl" style="left:1018px;width:82px;padding-left:1px">4-28  9:30</div>
<div class="a" style="left:555px;top:784px;width:1px;height:5px;background:#000"></div>
<div class="tl" style="left:539px;width:192px;background:#808080;color:#e0ecff;padding-left:17px">2015-04-24  09:30:08</div>
<div class="tl" style="left:1149px;width:38px;background:#ff0000;color:#380000;padding-left:10px">9 L</div>
</div>

<div id="dlg">
<div class="a" style="left:3px;top:27px;width:772px;height:621px;background:#aad4f7;border:1px solid #8db4d8;border-bottom-color:#8db0d2;border-left-color:#aad4f7"></div>
<div class="x" style="left:105px;top:32px;font-size:15px;letter-spacing:-0.33px;line-height:18px;height:18px;color:#303030">Study Settings: ESM5-CME [CB]  #3 - Profile Period: 1 Days, TPOs: 0.25 x 30 min   (ID:1)</div>
<div class="a" style="left:741px;top:28px;width:31px;height:20px;background:#c75050"></div>
<svg class="a" style="left:751px;top:33px" width="11" height="10" viewBox="0 0 11 10"><path d="M2.3 2.4 L9.7 8.8 M9.7 2.4 L2.3 8.8" stroke="#fff" stroke-width="2" fill="none"/></svg>
<div class="a" style="left:6px;top:52px;width:766px;height:593px;background:#f0f0f0;border-top:1px solid #9cbfe0"></div>
<div class="a" style="left:20px;top:90px;width:738px;height:503px;border:1px solid;border-color:#fff #696969 #696969 #fff;box-shadow:inset -1px -1px 0 #a0a0a0"></div>
<div class="a" style="left:20px;top:67px;width:128px;height:24px;background:#f0f0f0;border:1px solid;border-color:#fff #696969 transparent #fff;border-bottom:0;border-radius:2px 2px 0 0;box-shadow:inset -1px 0 0 #a0a0a0"></div>
<div class="a" style="left:148px;top:70px;width:76px;height:20px;border:1px solid;border-color:#fff #696969 transparent transparent;border-bottom:0;border-left:0;border-radius:0 2px 0 0;box-shadow:inset -1px 0 0 #a0a0a0"></div>
<div class="a" style="left:224px;top:70px;width:48px;height:20px;border:1px solid;border-color:#fff #696969 transparent transparent;border-bottom:0;border-left:0;border-radius:0 2px 0 0;box-shadow:inset -1px 0 0 #a0a0a0"></div>
<div class="x" style="left:28px;top:70.5px;letter-spacing:-0.14px;">Settings and Inputs</div>
<div class="x" style="left:152px;top:72.5px;">Subgraphs</div>
<div class="x" style="left:230px;top:72.5px;">Alerts</div>
<div class="x" style="left:36px;top:129px;letter-spacing:0.12px;">Standard Precedence</div>
<div class="x" style="left:36px;top:157px;">Based On:</div>
<div class="sunk" style="left:36px;top:176px;width:207px;height:24px"></div>
<div class="x" style="left:40px;top:180.7px;letter-spacing:-0.18px;">&lt;Main Price Graph&gt;</div>
<div class="drop" style="left:225px;top:178px;height:19px"></div>
<div class="x" style="left:36px;top:208.7px;letter-spacing:-0.09px;">Short Name:</div>
<div class="sunk" style="left:36px;top:228px;width:207px;height:23px"></div>
<div class="x" style="left:36px;top:261px;letter-spacing:-0.15px;">Chart Region:</div>
<div class="sunk" style="left:36px;top:280px;width:98px;height:23px"></div>
<div class="x" style="left:41px;top:285px;">1</div>
<div class="drop" style="left:115px;top:282px;height:19px"></div>
<div class="btn" style="left:146px;top:276px;width:98px;height:28px;line-height:26px">Scale</div>
<div class="x" style="left:36px;top:313px;">Value Format:</div>
<div class="sunk" style="left:36px;top:332px;width:169px;height:23px"></div>
<div class="x" style="left:40px;top:337px;">.01</div>
<div class="drop" style="left:186px;top:334px;height:19px"></div>
<div class="cb" style="left:36px;top:371px"></div>
<div class="x" style="left:54px;top:370px;">Display As Main Price Graph</div>
<div class="cb" style="left:36px;top:395px"></div>
<div class="x" style="left:54px;top:394px;">Hide Study</div>
<div class="cb" style="left:36px;top:458px"></div>
<div class="x" style="left:54px;top:457px;letter-spacing:-0.10px;">Protect with Password</div>
<div class="cb" style="left:36px;top:427px"></div>
<div class="x" style="left:54px;top:418px;letter-spacing:-0.07px;">Draw Study Underneath</div>
<div class="x" style="left:54px;top:434px;letter-spacing:-0.06px;">Main Price Graph</div>
<div class="a" style="left:256px;top:106px;width:489px;height:399px;background:#fff;border:1px solid;border-color:#a0a0a0 #fff #fff #a0a0a0;box-shadow:inset 1px 1px 0 #696969,inset -1px -1px 0 #e3e3e3"></div>
<div class="a" style="left:258px;top:108px;width:470px;height:19px;background:#f0f0f0;border-bottom:1px solid #a0a0a0;box-shadow:0 1px 0 #e3e3e3"></div>
<div class="a" style="left:536px;top:108px;width:2px;height:18px;border-left:1px solid #a0a0a0;border-right:1px solid #fff"></div>
<div class="x" style="left:264px;top:110.7px;">Input Name</div>
<div class="x" style="left:544px;top:110.7px;">Input Value</div>
<div class="a" style="left:258px;top:128px;width:470px;height:360px;overflow:hidden">
<div class="a" style="left:279px;top:0;width:1px;height:360px;background:#f0f0f0"></div>
<div class="a" style="left:0;top:1px;width:470px;height:1px;background:#eee"></div>
<div class="a" style="left:4px;top:219px;width:338px;height:22px;background:#ffff68;border-radius:3px 1px 2px 6px"></div>
<div class="a" style="left:1px;top:273px;width:332px;height:18px;background:#ffff68;border-radius:2px 2px 2px 4px"></div>
<div class="row" style="top:2px"><span class="n" style="letter-spacing:-0.03px">Letter/Block Price Increment in Ticks</span><span class="v" style="letter-spacing:0.00px">1</span></div>
<div class="row" style="top:19px"><span class="n" style="letter-spacing:0.00px">Profile Time Period Length</span><span class="v" style="letter-spacing:0.00px">1</span></div>
<div class="row" style="top:36px"><span class="n" style="letter-spacing:0.00px">Profile Time Period Length Unit</span><span class="v" style="letter-spacing:0.00px">Days</span></div>
<div class="row" style="top:53px"><span class="n" style="letter-spacing:0.00px">Number of TPO Profile Periods</span><span class="v" style="letter-spacing:0.00px">Multiple Periods Fixed By Time</span></div>
<div class="row" style="top:70px"><span class="n" style="letter-spacing:-0.10px">TPO Letter/Block Time Period Length In Min...</span><span class="v" style="letter-spacing:0.00px">30</span></div>
<div class="row" style="top:87px"><span class="n" style="letter-spacing:-0.16px">Letters Always Start At Primary Session Start ...</span><span class="v" style="letter-spacing:0.00px">Yes</span></div>
<div class="row" style="top:104px"><span class="n" style="letter-spacing:0.07px">Align Volume Profiles To TPO Profiles</span><span class="v" style="letter-spacing:0.00px">No</span></div>
<div class="row" style="top:121px"><span class="n" style="letter-spacing:0.12px">Display Total TPO Count</span><span class="v" style="letter-spacing:0.00px">No</span></div>
<div class="row" style="top:138px"><span class="n" style="letter-spacing:-0.14px">Highlight Open In Profile</span><span class="v" style="letter-spacing:0.00px">Yes</span></div>
<div class="row" style="top:155px"><span class="n" style="letter-spacing:-0.06px">Highlight TPO Value Area And Point Of Control</span><span class="v" style="letter-spacing:0.00px">No</span></div>
<div class="row" style="top:172px"><span class="n" style="letter-spacing:0.05px">Value Area Highlight Based On Volume</span><span class="v" style="letter-spacing:0.00px">No</span></div>
<div class="row" style="top:189px"><span class="n" style="letter-spacing:-0.10px">Point Of Control Highlight Based On Volume</span><span class="v" style="letter-spacing:0.00px">No</span></div>
<div class="row" style="top:206px"><span class="n" style="letter-spacing:0.09px">TPO Value Area %</span><span class="v" style="letter-spacing:0.00px">70</span></div>
<div class="row" style="top:223px"><span class="n" style="color:#8e8e28;letter-spacing:-0.05px">Count 2 Levels at a Time for Value Area</span><span class="v" style="color:#8e8e28;letter-spacing:0.00px">Yes</span></div>
<div class="row" style="top:240px"><span class="n" style="letter-spacing:0.00px">Extend Value Area</span><span class="v" style="letter-spacing:-0.09px">End Of Period</span></div>
<div class="row" style="top:257px"><span class="n" style="letter-spacing:-0.17px">Extend TPO Point of Control</span><span class="v" style="letter-spacing:-0.20px">Until Future Intersection</span></div>
<div class="row" style="top:274px"><span class="n" style="color:#8e8e28;letter-spacing:0.14px">Volume Value Area %</span><span class="v" style="color:#8e8e28;letter-spacing:0.00px">70</span></div>
<div class="row" style="top:291px"><span class="n" style="letter-spacing:0.00px">TPO Letter/Block Colors</span><span class="v" style="letter-spacing:-0.08px">Use Letter/Block Color 1-18</span></div>
<div class="row" style="top:308px"><span class="n" style="letter-spacing:0.07px">Shade TPO Letters/Blocks Based On Time</span><span class="v" style="letter-spacing:0.00px">No</span></div>
<div class="row" style="top:325px"><span class="n" style="letter-spacing:0.04px">Display TPOs as Letters</span><span class="v" style="letter-spacing:0.00px">Yes</span></div>
<div class="row" style="top:342px"><span class="n" style="letter-spacing:-0.27px">Letter Font Size (0=Auto)</span><span class="v" style="letter-spacing:0.00px">12</span></div>
</div>
<div class="a" style="left:728px;top:108px;width:16px;height:380px;background:#f0f0f0"></div>
<div class="a" style="left:728px;top:125px;width:15px;height:109px;background:#cdcdcd"></div>
<svg class="a" style="left:731px;top:114px" width="10" height="7" viewBox="0 0 10 7"><path d="M1.5 5.5 L5 2 L8.5 5.5" stroke="#505050" stroke-width="2" fill="none"/></svg>
<svg class="a" style="left:731px;top:475px" width="10" height="7" viewBox="0 0 10 7"><path d="M1.5 1.5 L5 5 L8.5 1.5" stroke="#505050" stroke-width="2" fill="none"/></svg>
<div class="a" style="left:258px;top:488px;width:486px;height:15px;background:#f0f0f0"></div>
<div class="a" style="left:275px;top:488px;width:425px;height:15px;background:#cdcdcd"></div>
<svg class="a" style="left:262px;top:491px" width="7" height="10" viewBox="0 0 7 10"><path d="M5 1.5 L1.5 5 L5 8.5" stroke="#505050" stroke-width="2" fill="none"/></svg>
<svg class="a" style="left:714px;top:491px" width="7" height="10" viewBox="0 0 7 10"><path d="M2 1.5 L5.5 5 L2 8.5" stroke="#505050" stroke-width="2" fill="none"/></svg>
<div class="a" style="left:256px;top:520px;width:489px;height:47px;border:1px solid #a6a6a6"></div>
<div class="x" style="left:263px;top:512.7px;letter-spacing:-0.20px;background:#f0f0f0;padding:0 2px">Input</div>
<div class="x" style="left:266px;top:532.5px;letter-spacing:-0.10px;">Select an input in the list above</div>
<div class="btn" style="left:20px;width:100px;border-color:#696969;box-shadow:inset 1px 1px 0 #fff,inset -1px -1px 0 #696969,inset -2px -2px 0 #a0a0a0">OK</div>
<div class="btn" style="left:124px;width:100px">Cancel</div>
<div class="btn" style="left:228px;width:100px">Apply</div>
<div class="btn" style="left:332px;width:100px">Help</div>
<div class="btn" style="left:436px;width:108px">Reset Defaults</div>
<div class="cb" style="left:552px;top:609px"></div>
<div class="x" style="left:570px;top:600.7px;">Save these settings</div>
<div class="x" style="left:570px;top:616.3px;">as the default</div>
</div>
</body></html>
